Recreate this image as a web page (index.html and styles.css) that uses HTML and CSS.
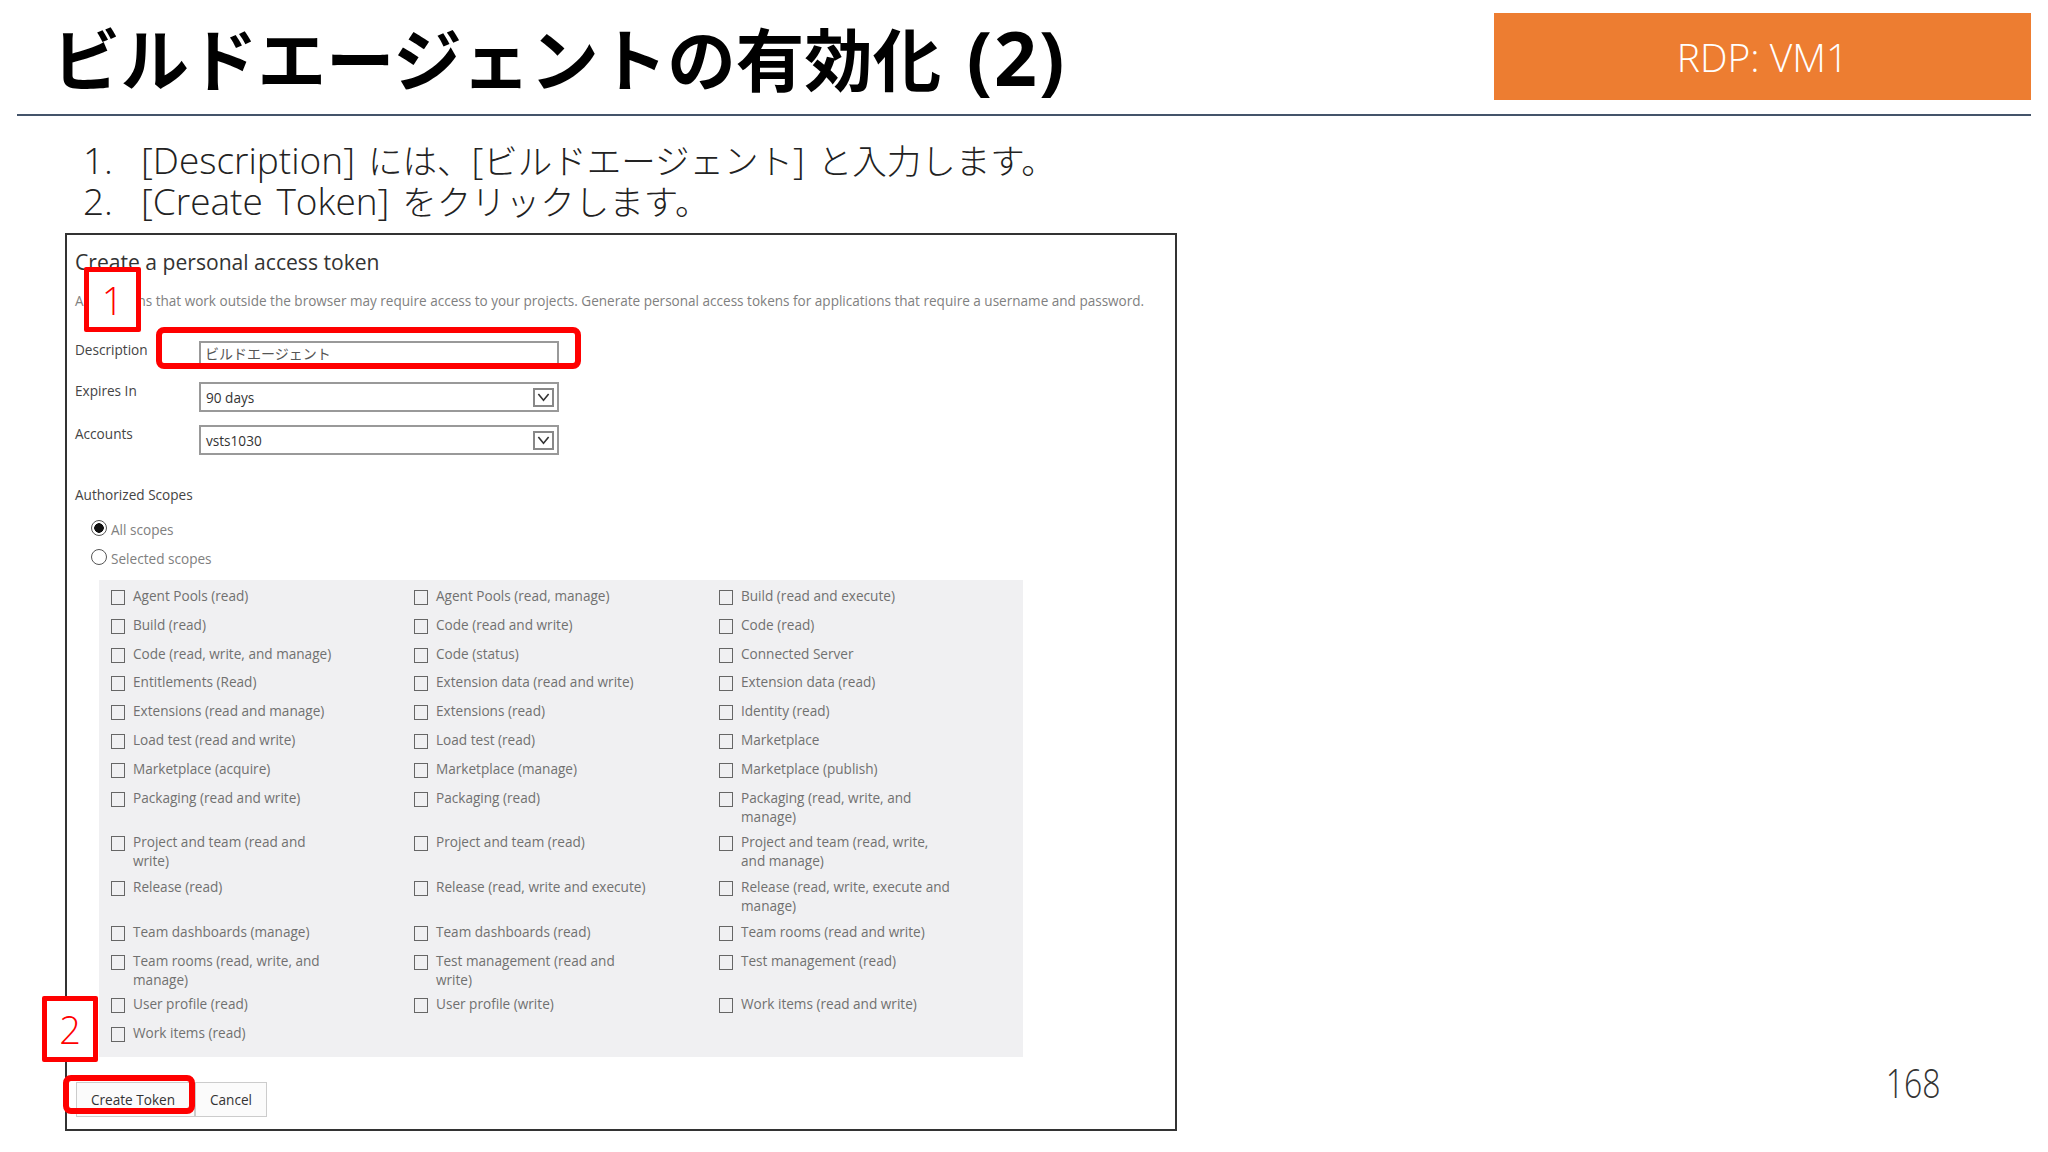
FILE: index.html
```html
<!DOCTYPE html>
<html lang="ja">
<head>
<meta charset="utf-8">
<title>ビルドエージェントの有効化 (2)</title>
<link rel="stylesheet" href="styles.css">
</head>
<body>
<div class="slide">
  <header class="head">
    <h1 class="title">ビルドエージェントの有効化 <span class="title-num">(2)</span></h1>
    <div class="tag">RDP: VM1</div>
  </header>
  <ol class="steps">
    <li class="step"><span class="num">1.</span><span><span class="en">[Description]</span> には、<span class="en">[</span>ビルドエージェント<span class="en">]</span> と入力します。</span></li>
    <li class="step"><span class="num">2.</span><span><span class="en">[Create Token]</span> をクリックします。</span></li>
  </ol>
  <div class="main">
    <section class="shot">
      <h2 class="shot-title">Create a personal access token</h2>
      <p class="shot-desc">Applications that work outside the browser may require access to your projects. Generate personal access tokens for applications that require a username and password.</p>
      <div class="form">
        <div class="lbl">Description</div>
        <div class="field field-input">ビルドエージェント</div>
        <div class="lbl">Expires In</div>
        <div class="field field-select">90 days<span class="arrow"><svg viewBox="0 0 21 19" width="17" height="15"><path d="M4 5l6.500 8L17 5" fill="none" stroke="#333" stroke-width="2"/></svg></span></div>
        <div class="lbl">Accounts</div>
        <div class="field field-select">vsts1030<span class="arrow"><svg viewBox="0 0 21 19" width="17" height="15"><path d="M4 5l6.500 8L17 5" fill="none" stroke="#333" stroke-width="2"/></svg></span></div>
      </div>
      <div class="scopes-title">Authorized Scopes</div>
      <div class="radios">
        <div class="radio-row"><span class="radio radio-on"></span>All scopes</div>
        <div class="radio-row"><span class="radio"></span>Selected scopes</div>
      </div>
      <div class="scopes">
        <div class="opt"><span class="box"></span><span class="txt">Agent Pools (read)</span></div>
        <div class="opt"><span class="box"></span><span class="txt">Agent Pools (read, manage)</span></div>
        <div class="opt"><span class="box"></span><span class="txt">Build (read and execute)</span></div>
        <div class="opt"><span class="box"></span><span class="txt">Build (read)</span></div>
        <div class="opt"><span class="box"></span><span class="txt">Code (read and write)</span></div>
        <div class="opt"><span class="box"></span><span class="txt">Code (read)</span></div>
        <div class="opt"><span class="box"></span><span class="txt">Code (read, write, and manage)</span></div>
        <div class="opt"><span class="box"></span><span class="txt">Code (status)</span></div>
        <div class="opt"><span class="box"></span><span class="txt">Connected Server</span></div>
        <div class="opt"><span class="box"></span><span class="txt">Entitlements (Read)</span></div>
        <div class="opt"><span class="box"></span><span class="txt">Extension data (read and write)</span></div>
        <div class="opt"><span class="box"></span><span class="txt">Extension data (read)</span></div>
        <div class="opt"><span class="box"></span><span class="txt">Extensions (read and manage)</span></div>
        <div class="opt"><span class="box"></span><span class="txt">Extensions (read)</span></div>
        <div class="opt"><span class="box"></span><span class="txt">Identity (read)</span></div>
        <div class="opt"><span class="box"></span><span class="txt">Load test (read and write)</span></div>
        <div class="opt"><span class="box"></span><span class="txt">Load test (read)</span></div>
        <div class="opt"><span class="box"></span><span class="txt">Marketplace</span></div>
        <div class="opt"><span class="box"></span><span class="txt">Marketplace (acquire)</span></div>
        <div class="opt"><span class="box"></span><span class="txt">Marketplace (manage)</span></div>
        <div class="opt"><span class="box"></span><span class="txt">Marketplace (publish)</span></div>
        <div class="opt"><span class="box"></span><span class="txt">Packaging (read and write)</span></div>
        <div class="opt"><span class="box"></span><span class="txt">Packaging (read)</span></div>
        <div class="opt"><span class="box"></span><span class="txt">Packaging (read, write, and manage)</span></div>
        <div class="opt"><span class="box"></span><span class="txt">Project and team (read and write)</span></div>
        <div class="opt"><span class="box"></span><span class="txt">Project and team (read)</span></div>
        <div class="opt"><span class="box"></span><span class="txt">Project and team (read, write, and manage)</span></div>
        <div class="opt"><span class="box"></span><span class="txt">Release (read)</span></div>
        <div class="opt"><span class="box"></span><span class="txt">Release (read, write and execute)</span></div>
        <div class="opt"><span class="box"></span><span class="txt">Release (read, write, execute and manage)</span></div>
        <div class="opt"><span class="box"></span><span class="txt">Team dashboards (manage)</span></div>
        <div class="opt"><span class="box"></span><span class="txt">Team dashboards (read)</span></div>
        <div class="opt"><span class="box"></span><span class="txt">Team rooms (read and write)</span></div>
        <div class="opt"><span class="box"></span><span class="txt">Team rooms (read, write, and manage)</span></div>
        <div class="opt"><span class="box"></span><span class="txt">Test management (read and write)</span></div>
        <div class="opt"><span class="box"></span><span class="txt">Test management (read)</span></div>
        <div class="opt"><span class="box"></span><span class="txt">User profile (read)</span></div>
        <div class="opt"><span class="box"></span><span class="txt">User profile (write)</span></div>
        <div class="opt"><span class="box"></span><span class="txt">Work items (read and write)</span></div>
        <div class="opt"><span class="box"></span><span class="txt">Work items (read)</span></div>
      </div>
      <div class="buttons">
        <div class="btn btn-create">Create Token</div>
        <div class="btn btn-cancel">Cancel</div>
      </div>
      <div class="badge badge-one">1</div>
      <div class="badge badge-two">2</div>
      <div class="mark mark-input"></div>
      <div class="mark mark-button"></div>
    </section>
    <div class="page-num">168</div>
  </div>
</div>
</body>
</html>
```
FILE: styles.css
```css
* { box-sizing: border-box; }
html, body { margin: 0; padding: 0; background: #fff; }
body { font-family: "Open Sans", "Noto Sans CJK JP", sans-serif; color: #222; }
.slide { width: 2048px; height: 1152px; overflow: hidden; }

.head {
  margin: 0 17px;
  height: 116px;
  padding-top: 13px;
  display: flex;
  justify-content: space-between;
  align-items: flex-start;
  border-bottom: 2px solid #44546a;
}
.title {
  margin: 0 0 0 35px;
  font-family: "Noto Sans CJK JP", sans-serif;
  font-size: 68.500px;
  line-height: 88px;
  font-weight: 700;
  color: #000;
  white-space: nowrap;
}
.title-num { font-family: "Open Sans", sans-serif; font-size: 75px; line-height: 0; letter-spacing: 2px; margin-left: 10px; }
.tag {
  width: 537px;
  height: 87px;
  background: #ed7d31;
  color: #fff;
  font-size: 39px;
  font-weight: 300;
  line-height: 87px;
  text-align: center;
}

.steps { list-style: none; margin: 24px 0 11px; padding: 0 0 0 83px; }
.step { display: flex; align-items: baseline; height: 41px; font-size: 34.500px; font-weight: 300; line-height: 41px; word-spacing: 4px; color: #222; }
.num { width: 58px; flex: none; font-size: 37px; line-height: 0; }
.en { font-size: 37px; line-height: 0; }

.main { display: flex; justify-content: space-between; align-items: flex-end; padding: 0 108px 22px 65px; }

.shot {
  position: relative;
  width: 1112px;
  height: 898px;
  border: 2px solid #333;
  padding: 13px 0 0 8px;
  font-size: 13.600px;
  color: #444;
}
.shot-title { margin: 0; font-size: 21.100px; line-height: 28px; font-weight: 400; color: #333; }
.shot-desc { margin: 15px 0 30px; font-size: 13.550px; line-height: 20px; color: #808080; white-space: nowrap; }

.form { display: grid; grid-template-columns: 124px 360px; grid-template-rows: 28px 30px 30px; row-gap: 13px; }
.lbl { line-height: 20px; font-size: 13.600px; color: #444; margin-top: -1px; }
.field { border: 2px solid #999; background: #fff; display: flex; align-items: center; justify-content: space-between; color: #333; padding-left: 5px; font-size: 13.600px; }
.field-input { font-size: 14px; color: #555; align-items: flex-start; line-height: 22px; padding-left: 4px; }
.field-select { padding-left: 5px; padding-right: 3px; }
.arrow { width: 21px; height: 19px; border: 2px solid #888; display: flex; align-items: center; justify-content: center; }

.scopes-title { margin-top: 30px; line-height: 20px; color: #444; }
.radios { margin: 15px 0 11px 16px; display: flex; flex-direction: column; gap: 9px; }
.radio-row { display: flex; gap: 4px; line-height: 20px; color: #808080; }
.radio { width: 16px; height: 16px; border: 1.500px solid #555; border-radius: 50%; background: #fff; flex: none; }
.radio-on { background: radial-gradient(circle, #111 0 4.500px, #fff 5px); }

.scopes {
  margin-left: 24px;
  width: 924px;
  height: 477px;
  background: #f0f0f2;
  padding: 6px 0 0 12px;
  display: grid;
  grid-template-columns: 303px 305px 1fr;
  grid-template-rows: repeat(7, 28.800px) repeat(3, 44.700px) 29px 43px 29px 28.800px;
}
.opt { display: flex; gap: 8px; align-items: flex-start; color: #707070; line-height: 19px; }
.box { width: 14px; height: 15px; border: 1.500px solid #666; flex: none; margin-top: 4px; }
.txt { max-width: 211px; }

.buttons { display: flex; margin: 25px 0 0 1px; }
.btn { height: 35px; border: 1.500px solid #ccc; background: #fbfbfb; line-height: 33px; text-align: center; color: #333; font-size: 13.600px; }
.btn-create { width: 119px; padding-right: 5px; }
.btn-cancel { width: 72px; }

.badge {
  position: absolute;
  border: 5.500px solid #f00;
  border-radius: 2px;
  background: #fff;
  color: #f00;
  display: flex;
  align-items: center;
  justify-content: center;
  font-size: 38px;
  font-weight: 300;
}
.badge-one { left: 17px; top: 32px; width: 57px; height: 65px; }
.badge-two { left: -25px; top: 761px; width: 56px; height: 66px; }
.mark { position: absolute; border: 6.500px solid #f00; border-radius: 8px; }
.mark-input { left: 89px; top: 92px; width: 425px; height: 42px; }
.mark-button { left: -4px; top: 840px; width: 132px; height: 39px; }

.page-num { font-size: 40px; font-weight: 300; line-height: 40px; color: #333; margin-bottom: 28px; transform: scaleX(0.8); transform-origin: right; }
```
